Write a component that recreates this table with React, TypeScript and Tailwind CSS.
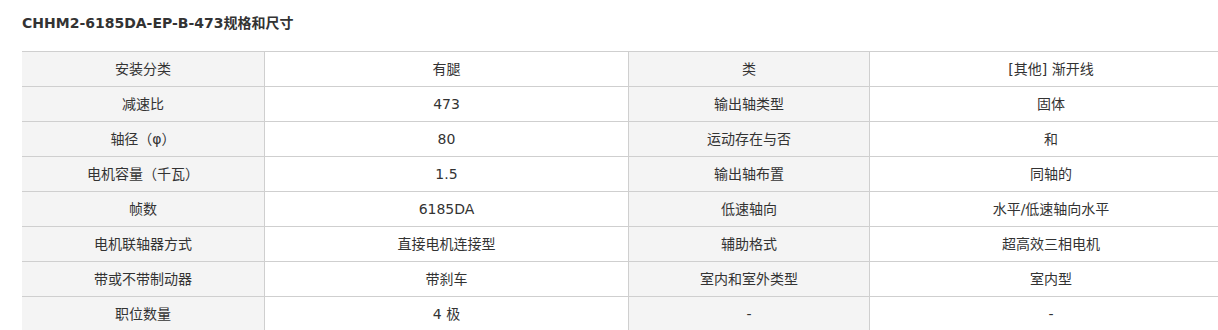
const rows: [string, string, string, string][] = [
  ['安装分类', '有腿', '类', '[其他] 渐开线'],
  ['减速比', '473', '输出轴类型', '固体'],
  ['轴径（φ）', '80', '运动存在与否', '和'],
  ['电机容量（千瓦）', '1.5', '输出轴布置', '同轴的'],
  ['帧数', '6185DA', '低速轴向', '水平/低速轴向水平'],
  ['电机联轴器方式', '直接电机连接型', '辅助格式', '超高效三相电机'],
  ['带或不带制动器', '带刹车', '室内和室外类型', '室内型'],
  ['职位数量', '4 极', '-', '-'],
];

function Cell({ text, head, first }: { text: string; head: boolean; first: boolean }) {
  return (
    <div
      className={`h-[35px] flex items-center justify-center border-t border-[#cfcfcf] text-[14px] text-[#333] ${
        first ? '' : 'border-l'
      } ${head ? 'bg-[#f4f4f4]' : 'bg-white'}`}
    >
      {text}
    </div>
  );
}

export default function App() {
  return (
    <div
      className="w-[1218px] h-[330px] overflow-hidden bg-white pl-[22px]"
      style={{ fontFamily: '"DejaVu Sans", "Noto Sans CJK SC", sans-serif' }}
    >
      <h2 className="pt-[13px] h-[51px] text-[14px] leading-5 font-bold text-[#333]">
        CHHM2-6185DA-EP-B-473规格和尺寸
      </h2>
      <div className="grid grid-cols-[242px_364px_241px_363px] w-[1210px]">
        {rows.map((r, i) => (
          <div key={i} className="contents">
            <Cell text={r[0]} head first />
            <Cell text={r[1]} head={false} first={false} />
            <Cell text={r[2]} head first={false} />
            <Cell text={r[3]} head={false} first={false} />
          </div>
        ))}
      </div>
    </div>
  );
}
